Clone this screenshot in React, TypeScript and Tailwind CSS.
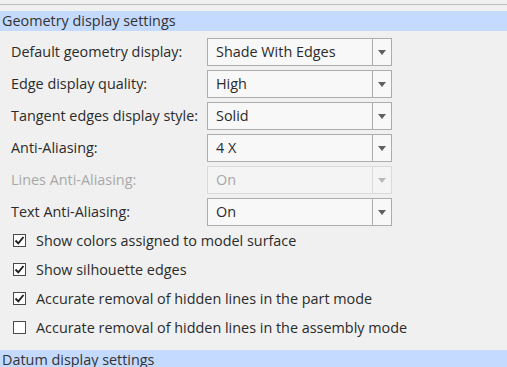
import React from 'react';

const FONT = "font-['Segoe_UI','Open_Sans','Noto_Sans',sans-serif]";

const rows = [
    { label: 'Default geometry display:', value: 'Shade With Edges' },
    { label: 'Edge display quality:', value: 'High' },
    { label: 'Tangent edges display style:', value: 'Solid' },
    { label: 'Anti-Aliasing:', value: '4 X' },
    { label: 'Lines Anti-Aliasing:', value: 'On', disabled: true },
    { label: 'Text Anti-Aliasing:', value: 'On' },
];

const checks = [
    { label: 'Show colors assigned to model surface', checked: true },
    { label: 'Show silhouette edges', checked: true },
    { label: 'Accurate removal of hidden lines in the part mode', checked: true },
    { label: 'Accurate removal of hidden lines in the assembly mode', checked: false },
];

const Select = ({ value, disabled }: { value: string; disabled?: boolean }) => (
    <div
        className={`flex h-[28px] w-[185px] border ${
            disabled ? 'border-[#dadada] bg-[#f4f4f4] text-[#a8a8a8]' : 'border-[#adadad] bg-[#f8f8f8] text-[#2b2b2b]'
        }`}
    >
        <div className="flex-1 flex items-center pl-[8px] text-[14.4px]">{value}</div>
        <div
            className={`w-[19px] flex items-center justify-center border-l ${
                disabled ? 'border-[#dadada]' : 'border-[#adadad]'
            }`}
        >
            <svg width="8" height="5" viewBox="0 0 8 5">
                <path d="M0 0h8L4 5z" fill={disabled ? '#b8b8b8' : '#606060'} />
            </svg>
        </div>
    </div>
);

const Checkbox = ({ checked }: { checked: boolean }) => (
    <div className="w-[13px] h-[13px] border border-[#4a4a4a] bg-white flex items-center justify-center">
        {checked && (
            <svg width="11" height="11" viewBox="0 0 11 11">
                <path d="M1.5 5.5l2.8 2.8L9.5 2" fill="none" stroke="#1e1e1e" strokeWidth="1.9" />
            </svg>
        )}
    </div>
);

export default function App() {
    return (
        <div className={`w-[507px] h-[367px] bg-[#f0f0f0] overflow-hidden ${FONT}`}>
            <div className="pt-[4px]">
                <div className="h-px bg-[#bdbdbd]" />
            </div>
            <div className="mt-[6px] h-[20px] bg-[#c4daff] pl-[2px] flex items-center text-[14.4px] text-[#333]">
                Geometry display settings
            </div>

            <div className="mt-[7px] flex flex-col gap-[4px]">
                {rows.map((r) => (
                    <div key={r.label} className="flex items-center h-[28px]">
                        <div
                            className={`w-[207px] pl-[11px] text-[14.4px] ${
                                r.disabled ? 'text-[#a8a8a8]' : 'text-[#2b2b2b]'
                            }`}
                        >
                            {r.label}
                        </div>
                        <Select value={r.value} disabled={r.disabled} />
                    </div>
                ))}
            </div>

            <div className="flex flex-col">
                {checks.map((c) => (
                    <div key={c.label} className="h-[29px] flex items-center pl-[13px] gap-[10px] text-[14.4px] text-[#2b2b2b]">
                        <Checkbox checked={c.checked} />
                        <span>{c.label}</span>
                    </div>
                ))}
            </div>

            <div className="mt-[8px] h-[20px] bg-[#c4daff] pl-[2px] flex items-center text-[14.4px] text-[#333]">
                Datum display settings
            </div>
        </div>
    );
}
